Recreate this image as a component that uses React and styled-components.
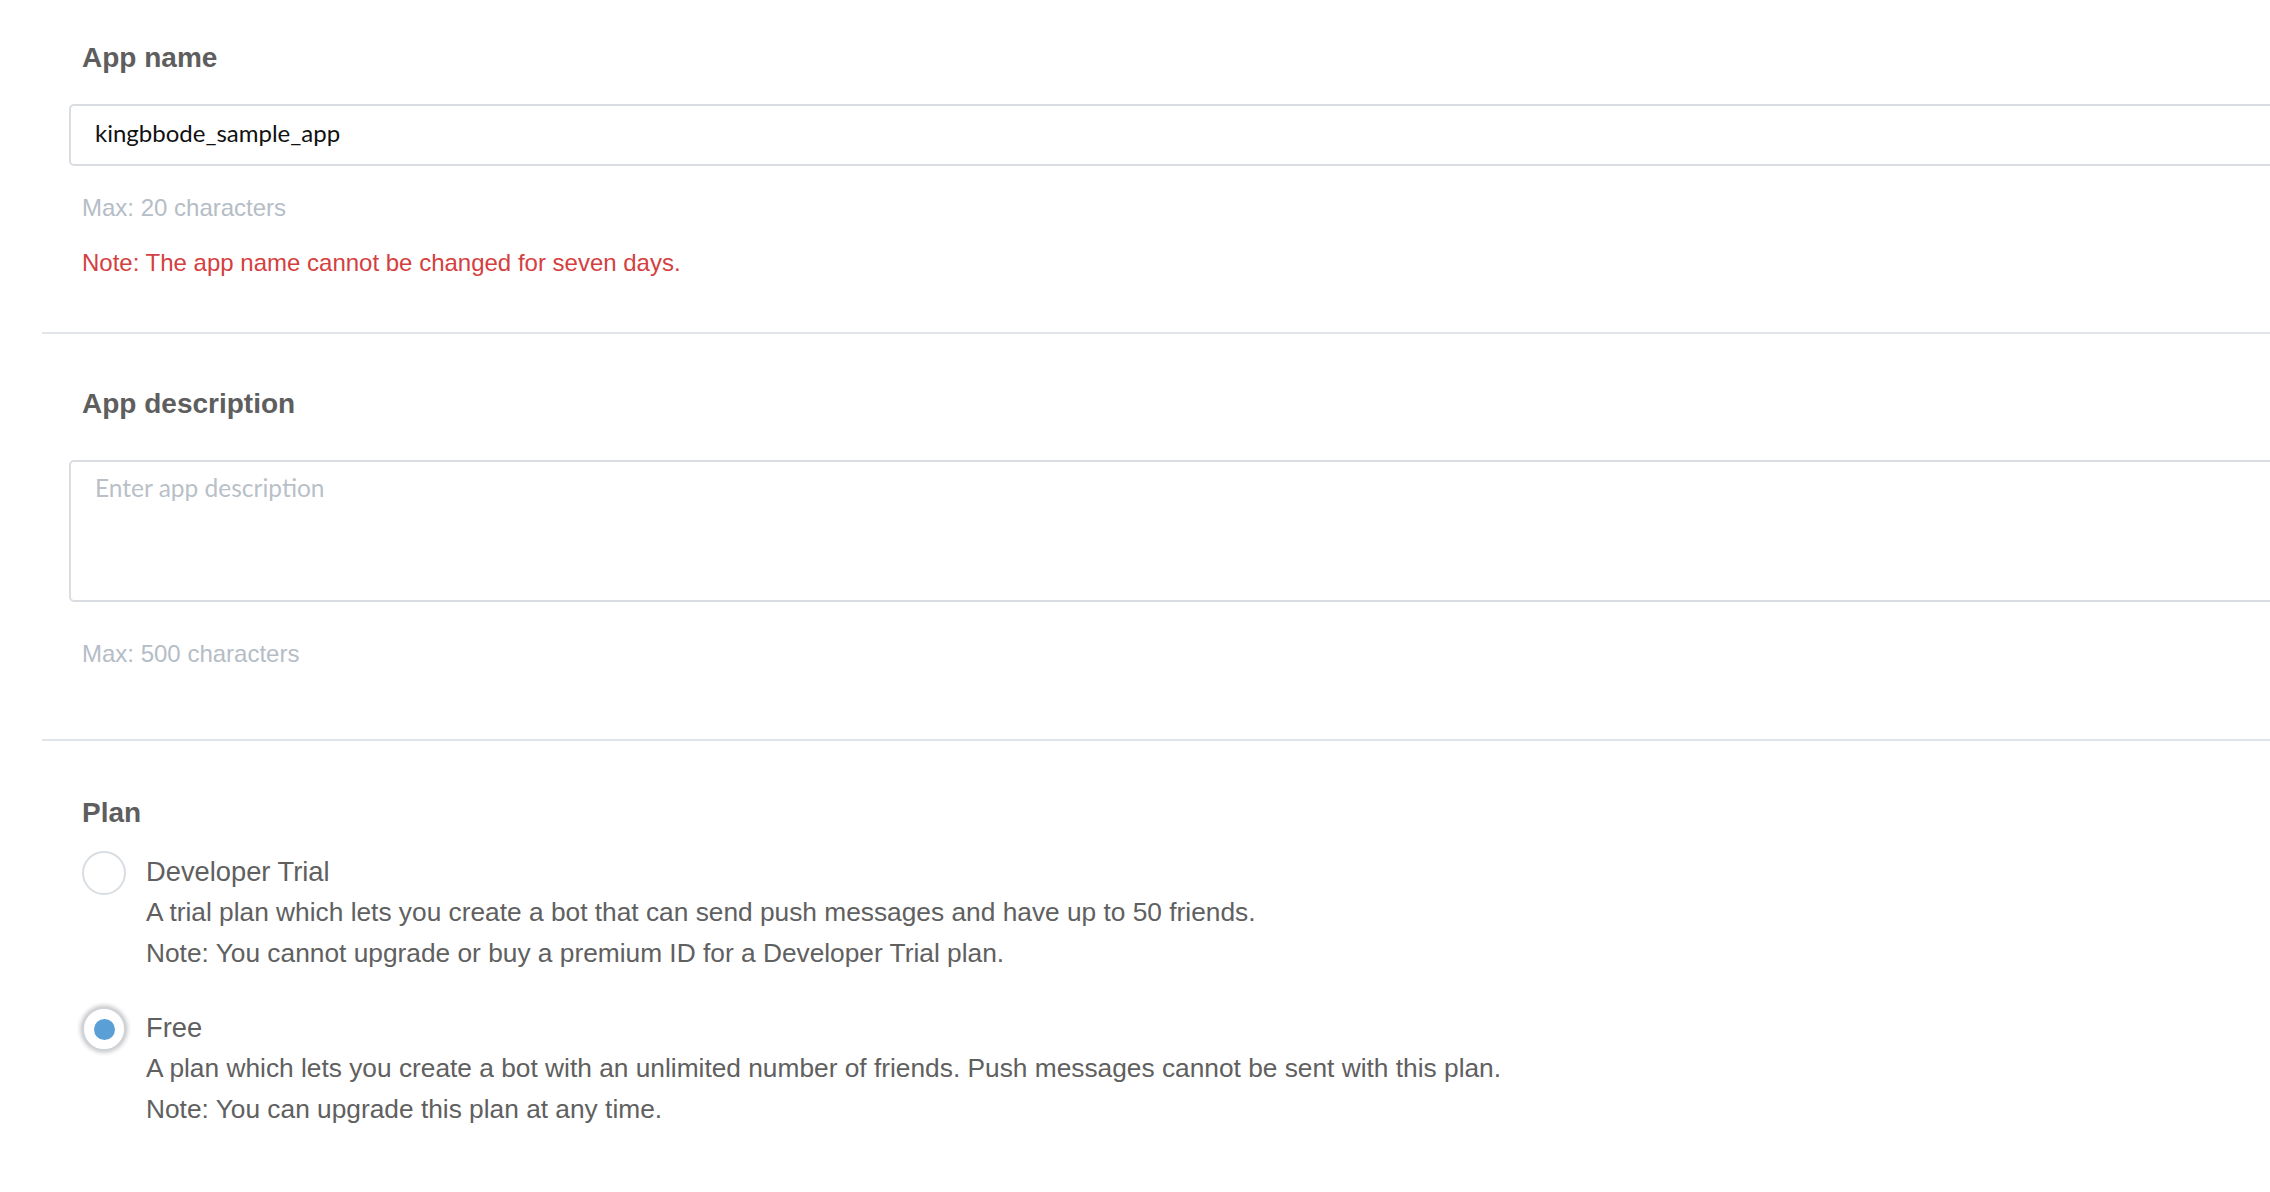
import React from 'react'
import styled, { createGlobalStyle } from 'styled-components'

const GlobalStyle = createGlobalStyle`
    body {
        margin: 0;
        background: #ffffff;
        overflow: hidden;
        font-family: "Liberation Sans", Helvetica, Arial, sans-serif;
    }
`

const Page = styled.div`
    padding-left: 42px;
    margin-right: -120px;
`

const Section = styled.section`
    padding: ${props => props.pad};
    padding-left: 27px;
    border-bottom: ${props => (props.last ? 'none' : '2px solid #e1e5e9')};
`

const Label = styled.div`
    padding-left: 13px;
    font-size: 28px;
    line-height: 40px;
    font-weight: bold;
    color: #5e5e5e;
`

const TextInput = styled.input`
    display: block;
    box-sizing: border-box;
    width: 100%;
    height: 62px;
    margin-top: 26px;
    padding: 0 24px 5px;
    border: 2px solid #d9dde2;
    border-radius: 5px;
    font-family: Lato, "Open Sans", sans-serif;
    font-size: 24px;
    color: #111;
    outline: none;
`

const TextArea = styled.textarea`
    display: block;
    box-sizing: border-box;
    width: 100%;
    height: 142px;
    margin-top: 36px;
    padding: 9px 24px;
    border: 2px solid #d9dde2;
    border-radius: 5px;
    font-family: Lato, "Open Sans", sans-serif;
    font-size: 24.5px;
    line-height: 34px;
    color: #111;
    resize: none;
    outline: none;

    &::placeholder {
        color: #b9c0c8;
    }
`

const Hint = styled.div`
    padding-left: 13px;
    margin-top: ${props => props.top};
    font-size: 24px;
    line-height: 34px;
    color: ${props => (props.warn ? '#d4403f' : '#b5bdc6')};
`

const Option = styled.div`
    display: flex;
    align-items: flex-start;
    gap: 20px;
    padding-left: 13px;
    margin-top: ${props => props.top};
`

const Radio = styled.span`
    flex: none;
    box-sizing: border-box;
    width: 44px;
    height: 44px;
    margin-top: -1px;
    border-radius: 50%;
    border: 2px solid ${props => (props.checked ? '#cfd3d8' : '#d8dde2')};
    background: #fff;
    display: flex;
    align-items: center;
    justify-content: center;
    box-shadow: ${props => (props.checked ? '0 0 5px 1px rgba(0, 0, 0, 0.28)' : 'none')};

    &::after {
        content: '';
        display: ${props => (props.checked ? 'block' : 'none')};
        width: 21px;
        height: 21px;
        border-radius: 50%;
        background: #5a9fd5;
    }
`

const OptionText = styled.div`
    color: #606060;
`

const OptionTitle = styled.div`
    font-size: 27.3px;
    line-height: 40px;
`

const OptionLine = styled.div`
    font-size: 26.3px;
    line-height: 40.5px;
`

const plans = [
    {
        title: 'Developer Trial',
        lines: [
            'A trial plan which lets you create a bot that can send push messages and have up to 50 friends.',
            'Note: You cannot upgrade or buy a premium ID for a Developer Trial plan.',
        ],
        checked: false,
    },
    {
        title: 'Free',
        lines: [
            'A plan which lets you create a bot with an unlimited number of friends. Push messages cannot be sent with this plan.',
            'Note: You can upgrade this plan at any time.',
        ],
        checked: true,
    },
]

function App() {
    return (
        <Page>
            <GlobalStyle />
            <Section pad="38px 0 52px">
                <Label>App name</Label>
                <TextInput defaultValue="kingbbode_sample_app" />
                <Hint top="25px">Max: 20 characters</Hint>
                <Hint top="21px" warn>Note: The app name cannot be changed for seven days.</Hint>
            </Section>
            <Section pad="50px 0 68px">
                <Label>App description</Label>
                <TextArea placeholder="Enter app description" />
                <Hint top="35px">Max: 500 characters</Hint>
            </Section>
            <Section pad="52px 0 60px" last>
                <Label>Plan</Label>
                {plans.map((plan, i) => (
                    <Option key={plan.title} top={i === 0 ? '19px' : '35px'}>
                        <Radio checked={plan.checked} />
                        <OptionText>
                            <OptionTitle>{plan.title}</OptionTitle>
                            {plan.lines.map(line => (
                                <OptionLine key={line}>{line}</OptionLine>
                            ))}
                        </OptionText>
                    </Option>
                ))}
            </Section>
        </Page>
    )
}

export default App
